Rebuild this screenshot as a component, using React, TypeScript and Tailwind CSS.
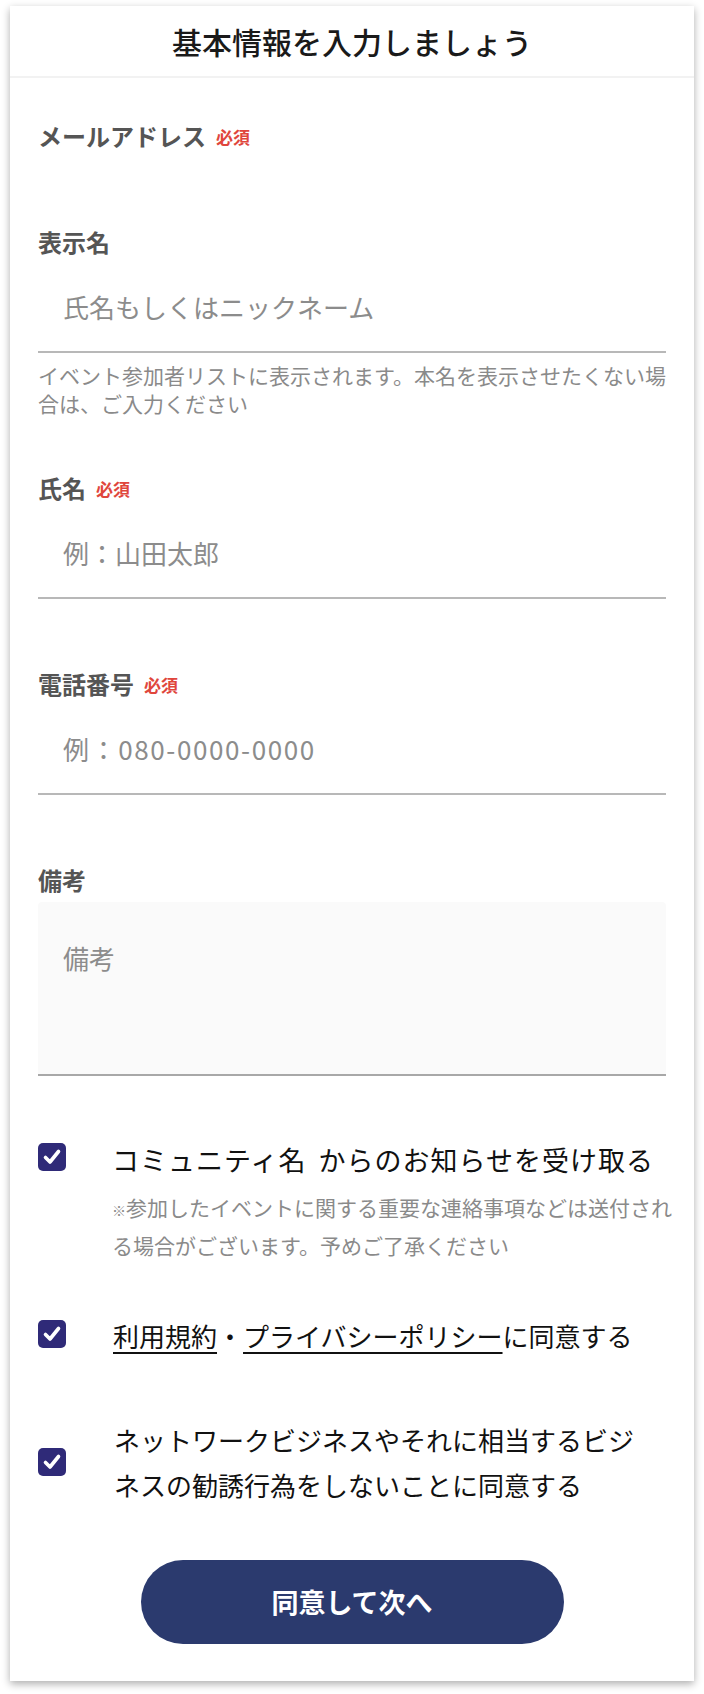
import React from "react";

function Label({ text, required }: { text: string; required?: boolean }) {
  return (
    <div className="flex items-center h-[30px]">
      <span className="text-[24px] leading-[30px] font-bold text-[#555555]">{text}</span>
      {required && (
        <span className="ml-[10px] text-[17px] leading-none font-bold text-[#e0463c]">必須</span>
      )}
    </div>
  );
}

function Check() {
  return (
    <div className="w-[28px] h-[28px] shrink-0 rounded-[5px] bg-[#2f2a78] flex items-center justify-center">
      <svg width="28" height="28" viewBox="0 0 28 28" fill="none">
        <path d="M7.5 14.5 L12 19 L20.5 8.5" stroke="#ffffff" strokeWidth="3.6" strokeLinecap="round" strokeLinejoin="round" />
      </svg>
    </div>
  );
}

export default function App() {
  return (
    <div className="min-h-[1694px] bg-white pt-[6px] pb-[14px] pl-[10px] font-['Noto_Sans_CJK_JP','Noto_Sans',sans-serif]">
      <div className="w-[684px] bg-white shadow-[0_3px_8px_rgba(0,0,0,0.32)]">
        <div className="h-[72px] flex items-center justify-center border-b-2 border-[#f2f2f2] text-[30px] font-medium text-[#1a1a1a]">
          基本情報を入力しましょう
        </div>
        <div className="px-[28px] pt-[43px] pb-[37px]">
          <Label text="メールアドレス" required />
          <input className="block w-full h-[76px] bg-transparent outline-none text-[26px]" />

          <Label text="表示名" />
          <input
            className="block w-full h-[96px] pt-[4px] pl-[25px] bg-transparent outline-none border-b-2 border-[#b8b8b8] text-[26px] text-[#222] placeholder:text-[#8c8c8c]"
            placeholder="氏名もしくはニックネーム"
          />
          <p className="mt-[8px] text-[21px] leading-[28px] text-[#8a8a8a]">
            イベント参加者リストに表示されます。本名を表示させたくない場合は、ご入力ください
          </p>

          <div className="mt-[56px]">
            <Label text="氏名" required />
            <input
              className="block w-full h-[96px] pt-[4px] pl-[25px] bg-transparent outline-none border-b-2 border-[#b8b8b8] text-[26px] text-[#222] placeholder:text-[#8c8c8c]"
              placeholder="例：山田太郎"
            />
          </div>

          <div className="mt-[70px]">
            <Label text="電話番号" required />
            <input
              className="block w-full h-[96px] pt-[4px] pl-[25px] bg-transparent outline-none border-b-2 border-[#b8b8b8] text-[26px] tracking-[1.6px] text-[#222] placeholder:text-[#8c8c8c]"
              placeholder="例：080-0000-0000"
            />
          </div>

          <div className="mt-[70px]">
            <Label text="備考" />
            <textarea
              className="mt-[7px] block w-full h-[174px] resize-none rounded-t-[4px] bg-[#fafafa] border-b-2 border-[#a8a8a8] pl-[25px] pt-[38px] text-[26px] leading-[36px] outline-none placeholder:text-[#8c8c8c]"
              placeholder="備考"
            />
          </div>

          <div className="mt-[66px] flex items-start">
            <div className="mt-[1px]">
              <Check />
            </div>
            <div className="ml-[46px]">
              <div className="text-[27px] tracking-[1px] leading-[36px] text-[#111111] whitespace-nowrap">
                <span className="mr-[5px]">コミュニティ名</span> からのお知らせを受け取る
              </div>
              <div className="mt-[12px] text-[21px] leading-[35px] text-[#8a8a8a] whitespace-nowrap">
                <span className="text-[14px]">※</span>参加したイベントに関する重要な連絡事項などは送付され
                <br />
                る場合がございます。予めご了承ください
              </div>
            </div>
          </div>

          <div className="mt-[55px] flex items-start">
            <div className="mt-[2px]">
              <Check />
            </div>
            <div className="ml-[47px] text-[26px] leading-[36px] text-[#111111] whitespace-nowrap">
              <span className="underline decoration-[1.5px] underline-offset-[5px]">利用規約</span>・
              <span className="underline decoration-[1.5px] underline-offset-[5px]">プライバシーポリシー</span>に同意する
            </div>
          </div>

          <div className="mt-[63px] flex items-center">
            <Check />
            <div className="ml-[48px] text-[26px] leading-[45px] text-[#111111] whitespace-nowrap">
              ネットワークビジネスやそれに相当するビジ
              <br />
              ネスの勧誘行為をしないことに同意する
            </div>
          </div>

          <button className="mt-[53px] mx-auto flex w-[423px] h-[84px] items-center justify-center rounded-full bg-[#2b3a6e] text-[27px] font-bold text-white">
            同意して次へ
          </button>
        </div>
      </div>
    </div>
  );
}
